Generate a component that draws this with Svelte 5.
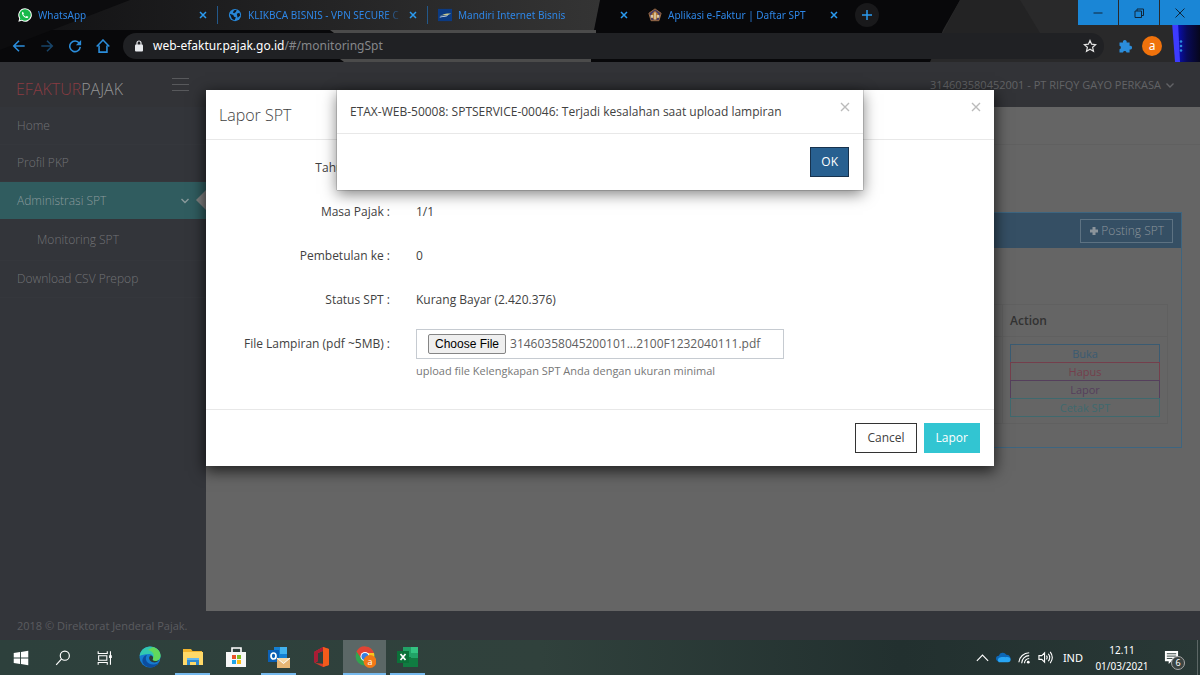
<script>
  let fileInput;
  let fileName = '31460358045200101...2100F1232040111.pdf';

  const tabs = [
    { icon: 'whatsapp', title: 'WhatsApp' },
    { icon: 'globe', title: 'KLIKBCA BISNIS - VPN SECURE C' },
    { icon: 'mandiri', title: 'Mandiri Internet Bisnis' },
    { icon: 'pajak', title: 'Aplikasi e-Faktur | Daftar SPT' }
  ];

  const details = [
    { label: 'Tahun Pajak :', value: '2021' },
    { label: 'Masa Pajak :', value: '1/1' },
    { label: 'Pembetulan ke :', value: '0' },
    { label: 'Status SPT :', value: 'Kurang Bayar (2.420.376)' }
  ];

  const actions = [
    { name: 'Buka', kind: 'blue' },
    { name: 'Hapus', kind: 'red' },
    { name: 'Lapor', kind: 'purple' },
    { name: 'Cetak SPT', kind: 'teal' }
  ];

  function onFileChange(event) {
    const file = event.target.files[0];
    if (file) fileName = file.name;
  }
</script>

<div class="screen">
  <header class="browser">
    <svg class="theme" viewBox="0 0 1200 62" preserveAspectRatio="none" aria-hidden="true">
      <defs>
        <linearGradient id="fade" x1="0" x2="1">
          <stop offset="0" stop-color="#111113" />
          <stop offset="1" stop-color="#343434" />
        </linearGradient>
        <linearGradient id="blue" x1="0" x2="1">
          <stop offset="0" stop-color="#0910d8" />
          <stop offset="0.5" stop-color="#080a58" />
          <stop offset="1" stop-color="#06061c" />
        </linearGradient>
      </defs>
      <rect width="1200" height="62" fill="#08080a" />
      <path d="M8 30V5Q8 0 14 0H600L594 30Z" fill="url(#fade)" />
      <path d="M0 50L130 0H0Z" fill="#0c0c0e" />
      <path d="M330 30H596V33H334Z" fill="#4b4b4b" />
      <path d="M340 59H591V62H344Z" fill="#4b4b4b" />
      <path d="M960 0H1180V62H930L943 30Z" fill="#29292a" />
      <path d="M960 0H1020L1040 33H943Z" fill="#232324" />
      <path d="M1174 22H1200V62H1179Z" fill="url(#blue)" />
      <path d="M1172 22H1178L1180 62H1175Z" fill="#3d3bff" />
    </svg>

    <div class="tab-row">
      {#each tabs as tab}
        <div class="tab">
          <svg class="tab-icon" viewBox="0 0 16 16" aria-hidden="true">
            {#if tab.icon === 'whatsapp'}
              <path d="M8 .3a7.7 7.7 0 0 0-6.600 11.600L.4 15.700l3.900-1A7.700 7.700 0 1 0 8 .3z" fill="#fff" />
              <path d="M8 1.500a6.500 6.500 0 0 0-5.400 10.100l-.6 2.500 2.500-.7A6.500 6.500 0 1 0 8 1.500z" fill="#19b94b" />
              <path d="M5.600 4.300c-.8.300-1.300 1.100-1 2.200.6 2.300 2.700 4.500 5 5 1.200.3 2.100-.4 2.200-1.500l-1.900-1-1 1C7.500 9.500 6.500 8.500 6 7.200l.8-.9z" fill="#fff" />
            {:else if tab.icon === 'globe'}
              <circle cx="8" cy="8" r="7" fill="#2787d8" />
              <path d="M2 6.500l4 1.500 1 2 2 .5-1.500 3.500-3-1.500zM7 2.500l3-.5-1 2.500-2 1.500-1.500-1zM10 6.500l3-1 1 3-3 2.500z" fill="#101820" />
            {:else if tab.icon === 'mandiri'}
              <rect y="1" width="16" height="14" fill="#0b3a82" />
              <path d="M1 9.500c3-1 5-1.500 7-1 2 .4 4-1.200 7-2-2-.3-4-.2-6 0-2 .2-3 1.200-4.500 1.500z" fill="#c9c98e" />
              <path d="M2 10.500c4-1.500 6 0 9-2" stroke="#c6d5e8" fill="none" />
            {:else}
              <path d="M8 1l7 5-2.500 8.500h-9L1 6z" fill="#443a67" stroke="#ab7440" />
              <path d="M8 3l4 4-2 6H6L4 7z" fill="#b0742f" />
              <path d="M7 5h2v8H7zM3 8h3v3H3zM10 8h3v3h-3z" fill="#dbc6a4" />
            {/if}
          </svg>
          <span class="tab-title">{tab.title}</span>
          <button class="tab-close" aria-label="Close tab">
            <svg viewBox="0 0 8 8"><path d="M1 1l6 6M7 1L1 7" /></svg>
          </button>
        </div>
      {/each}
      <button class="new-tab" aria-label="New tab">
        <svg viewBox="0 0 12 12"><path d="M6 1v10M1 6h10" /></svg>
      </button>
      <div class="window-buttons">
        <button aria-label="Minimize"><svg viewBox="0 0 12 12"><path d="M1.500 6h9" /></svg></button>
        <button aria-label="Restore"><svg viewBox="0 0 12 12"><path d="M2 4h6.500v6.500H2zM4 4V2h6.500v6.500h-2" /></svg></button>
        <button aria-label="Close"><svg viewBox="0 0 12 12"><path d="M1.500 1.500l9 9M10.500 1.500l-9 9" /></svg></button>
      </div>
    </div>

    <div class="toolbar">
      <button class="tool" aria-label="Back"><svg viewBox="0 0 16 16"><path d="M14.500 8H3M8 2L2 8l6 6" /></svg></button>
      <button class="tool dim" aria-label="Forward"><svg viewBox="0 0 16 16"><path d="M1.500 8H13M8 2l6 6-6 6" /></svg></button>
      <button class="tool" aria-label="Reload"><svg viewBox="0 0 16 16"><path d="M13 5A6 6 0 1 0 14 9" /><path d="M15 1v6H9z" fill="#2b8ddb" stroke="none" /></svg></button>
      <button class="tool" aria-label="Home"><svg viewBox="0 0 16 16"><path d="M.8 8.500L8 1.200l7.200 7.300M3.500 7.500v7.500h9v-7.500" /></svg></button>
      <div class="address">
        <svg class="lock" viewBox="0 0 10 12" aria-hidden="true">
          <rect x="1" y="4.500" width="8" height="7" rx="1" fill="#e8eaed" />
          <path d="M3 5V3a2 2 0 0 1 4 0v2" fill="none" stroke="#e8eaed" stroke-width="1.200" />
        </svg>
        <span class="url"><b>web-efaktur.pajak.go.id</b>/#/monitoringSpt</span>
        <button class="star" aria-label="Bookmark this page">
          <svg viewBox="0 0 14 14"><path d="M7 1.500l1.600 3.700 4 .4-3 2.700.9 4L7 10.200l-3.500 2.100.9-4-3-2.700 4-.4z" /></svg>
        </button>
      </div>
      <button class="side-tool" aria-label="Extensions">
        <svg viewBox="0 0 14 14"><path d="M1.500 3.500H5a1.900 1.900 0 1 1 3.600 0h3v3.300a1.900 1.900 0 1 1 0 3.600v3.100H8.500a1.800 1.800 0 0 0-3.500 0H1.500v-3.300a1.800 1.800 0 0 0 0-3.500z" fill="#2b8ddb" /></svg>
      </button>
      <button class="avatar" aria-label="Profile">a</button>
      <button class="side-tool" aria-label="Menu">
        <svg viewBox="0 0 14 14"><g fill="#2b8ddb"><circle cx="7" cy="2.500" r="1.300" /><circle cx="7" cy="7" r="1.300" /><circle cx="7" cy="11.500" r="1.300" /></g></svg>
      </button>
    </div>
  </header>

  <div class="page">
    <div class="topbar">
      <div class="brand-area">
        <a class="brand" href="#/home"><span>EFAKTUR</span>PAJAK</a>
        <button class="burger" aria-label="Toggle menu"><i></i><i></i><i></i></button>
      </div>
      <button class="user">
        314603580452001 - PT RIFQY GAYO PERKASA
        <svg viewBox="0 0 10 10"><path d="M1.500 3.500L5 7l3.500-3.500" /></svg>
      </button>
    </div>

    <div class="columns">
      <nav>
        <a href="#/home">Home</a>
        <a href="#/profil">Profil PKP</a>
        <a class="active" href="#/administrasi">
          Administrasi SPT
          <svg viewBox="0 0 10 10"><path d="M1.500 3L5 6.500 8.500 3" /></svg>
        </a>
        <a class="sub" href="#/monitoringSpt">Monitoring SPT</a>
        <a href="#/prepop">Download CSV Prepop</a>
      </nav>

      <main>
        <div class="crumb"></div>
        <section class="panel">
          <div class="panel-head">
            <button>
              <svg viewBox="0 0 10 10"><path d="M5 1v8M1 5h8" /></svg>
              Posting SPT
            </button>
          </div>
          <table>
            <thead>
              <tr><td></td><th class="action-col">Action</th></tr>
            </thead>
            <tbody>
              <tr>
                <td></td>
                <td class="action-col">
                  {#each actions as action}
                    <button class={action.kind}>{action.name}</button>
                  {/each}
                </td>
              </tr>
            </tbody>
          </table>
        </section>
      </main>
    </div>

    <footer>2018 © Direktorat Jenderal Pajak.</footer>

    <div class="layer">
      <div class="modal" role="dialog" aria-labelledby="lapor-title">
        <div class="modal-head">
          <h4 id="lapor-title">Lapor SPT</h4>
          <button class="dismiss" aria-label="Close"><svg viewBox="0 0 10 10"><path d="M1 1l8 8M9 1L1 9" /></svg></button>
        </div>
        <div class="modal-body">
          {#each details as row}
            <div class="row">
              <span class="label">{row.label}</span>
              <span>{row.value}</span>
            </div>
          {/each}
          <div class="row">
            <label class="label" for="lampiran">File Lampiran (pdf ~5MB) :</label>
            <div class="file-box">
              <button class="choose" on:click={() => fileInput.click()}>Choose File</button>
              <span>{fileName}</span>
              <input id="lampiran" type="file" accept=".pdf" bind:this={fileInput} on:change={onFileChange} />
            </div>
          </div>
          <p class="help">upload file Kelengkapan SPT Anda dengan ukuran minimal</p>
        </div>
        <div class="modal-foot">
          <button class="btn cancel">Cancel</button>
          <button class="btn submit">Lapor</button>
        </div>
      </div>
    </div>

    <div class="layer">
      <div class="alert" role="alertdialog" aria-labelledby="alert-text">
        <div class="alert-head">
          <span id="alert-text">ETAX-WEB-50008: SPTSERVICE-00046: Terjadi kesalahan saat upload lampiran</span>
          <button class="dismiss" aria-label="Close"><svg viewBox="0 0 10 10"><path d="M1 1l8 8M9 1L1 9" /></svg></button>
        </div>
        <div class="alert-foot">
          <button class="btn ok">OK</button>
        </div>
      </div>
    </div>
  </div>

  <div class="taskbar">
    <div class="start">
      <button aria-label="Start"><svg viewBox="0 0 22 22"><path d="M3 5.500l7-1v6H3zM11 4.300l8-1.200v7.400h-8zM3 11.500h7v6l-7-1zM11 11.500h8v7.400l-8-1.200z" fill="#fff" /></svg></button>
      <button aria-label="Search"><svg viewBox="0 0 22 22"><circle cx="13" cy="8.500" r="5" fill="none" stroke="#fff" stroke-width="1.300" /><path d="M9.500 12L3.500 18.500" stroke="#fff" stroke-width="1.300" /></svg></button>
      <button aria-label="Task view"><svg viewBox="0 0 22 22"><path d="M3.500 3.500V6h10V3.500M3.500 18.500V16h10v2.500M4 8.500h9v5H4zM17 3.500v15" fill="none" stroke="#fff" stroke-width="1.200" /><path d="M15.500 8h3v3h-3z" fill="#fff" /></svg></button>
    </div>
    <div class="apps">
      <button aria-label="Edge">
        <svg viewBox="0 0 22 22">
          <circle cx="11" cy="11" r="10.500" fill="#167bd0" />
          <path d="M.6 10C1.500 4 6 .5 11 .5c6 0 10.500 4 10.500 9 0 4-3 5.500-5.500 5.500-2 0-3-1-2-2.500 1-2-1-4.500-4-4.500-4 0-8 1-9.400 2z" fill="#32c8b0" />
          <path d="M14 1c5 1.500 7.500 5 7.500 8.500 0 4-3 5.500-5.500 5.500-2 0-3-1-2-2.500C16 9 14 5 9 4z" fill="#62d85c" />
          <path d="M8 9c-3 4 0 10 7 9.500 2 0 3.500-.8 5-2-2 3.500-5.500 5-9 5C5 21 2 16 4 12c1-2 2.500-3 4-3z" fill="#0c4d9f" />
          <path d="M14 12.500c-1 1.500 0 2.500 2 2.500 2 0 3.500-.5 4.500-1.500-2 3.500-7 4-9.500 1-1.500-2-1-4 .5-5 2 0 3 1.500 2.500 3z" fill="#2b3d3a" />
        </svg>
      </button>
      <button class="running" aria-label="File Explorer">
        <svg viewBox="0 0 22 22"><path d="M1 3h8l1.500 2H20v14H1z" fill="#f2b52e" /><path d="M1 6h20v13H1z" fill="#ffd968" /><path d="M5 12h12v7h-3v-3H8v3H5z" fill="#318bd0" /><path d="M5 12h12v2H5z" fill="#64b7ed" /></svg>
      </button>
      <button aria-label="Microsoft Store">
        <svg viewBox="0 0 22 22"><path d="M7 7V2h9v5" fill="none" stroke="#fff" stroke-width="1.600" /><path d="M1 6h20v15H1z" fill="#f7f7f7" /><path d="M7 9h4v4H7z" fill="#eb5328" /><path d="M12 9h4v4h-4z" fill="#80bd22" /><path d="M7 14h4v4H7z" fill="#20a5e8" /><path d="M12 14h4v4h-4z" fill="#fdba14" /></svg>
      </button>
      <button class="running" aria-label="Outlook">
        <svg viewBox="0 0 22 22"><path d="M6 1h13v14H6z" fill="#1480d2" /><path d="M12 1h7v7h-7z" fill="#42b3ed" /><path d="M0 4h11v12H0z" fill="#0c60b5" /><ellipse cx="5.500" cy="10" rx="2.500" ry="3" fill="none" stroke="#fff" stroke-width="1.700" /><path d="M9 12h13v10H9z" fill="#e8b675" /><path d="M9 12l6.500 5.500L22 12" fill="#f6d8a6" stroke="#fff" /></svg>
      </button>
      <button aria-label="Office">
        <svg viewBox="0 0 22 22"><path d="M3 6l9-5 6 2v16l-6 2-8-4 8 .8V5L7 7v8l-3 2z" fill="#d93b2a" /><path d="M12 1l6 2v16l-6 2z" fill="#f35b1b" /><path d="M3 6l9-5v4L7 7v8l-4 2z" fill="#a81d35" /></svg>
      </button>
      <button class="current" aria-label="Chrome">
        <svg viewBox="0 0 22 22"><circle cx="11" cy="10" r="9.500" fill="#32a350" /><path d="M2.500 5.500A9.500 9.500 0 0 1 20 7h-9l-4 5z" fill="#e14335" /><path d="M11 7h9c1.500 5-1.500 12-8 12.500l4-7z" fill="#f9c51d" /><circle cx="11" cy="10.500" r="4.500" fill="#fff" /><circle cx="11" cy="10.500" r="3.500" fill="#367fe4" /><circle cx="16" cy="15.500" r="6.500" fill="#f27816" /><text x="16" y="19" text-anchor="middle">a</text></svg>
      </button>
      <button class="running" aria-label="Excel">
        <svg viewBox="0 0 22 22"><path d="M6 1h15v20H6z" fill="#21a366" /><path d="M14 1h7v6h-7z" fill="#33c481" /><path d="M6 11h15v10H6z" fill="#107c41" /><path d="M14 7h7v5h-7z" fill="#21a366" /><path d="M0 5h12v12H0z" fill="#0b7139" /><path d="M3.500 8l5 6M8.500 8l-5 6" stroke="#fff" stroke-width="1.700" /></svg>
      </button>
    </div>
    <div class="tray">
      <svg viewBox="0 0 16 16"><path d="M2 11.500l6-6 6 6" class="line" /></svg>
      <svg class="cloud" viewBox="0 0 16 16"><path d="M3 12a3 3 0 0 1 0-6 4.500 4.500 0 0 1 8-1 4 4 0 0 1 3 7z" fill="#0d67b6" /><path d="M3 13a3 3 0 0 1 1-5c4-1 6 0 7-.5 3-.5 5 1 4.500 3.500-.3 1.500-1.500 2-2.500 2z" fill="#28a5f4" /></svg>
      <svg viewBox="0 0 16 16"><path d="M2 13A11 11 0 0 1 13 3M5 14a8 8 0 0 1 8-8M8 14a5 5 0 0 1 5-5" class="line" /><circle cx="12" cy="13" r="1.500" fill="#fff" /></svg>
      <svg viewBox="0 0 16 16"><path d="M1 6h3l3-3v10l-3-3H1zM9 6q1.500 2 0 4M11 4q3 4 0 8M13 2q4.500 6 0 12" class="line" /></svg>
      <span class="lang">IND</span>
      <div class="clock"><span>12.11</span><span>01/03/2021</span></div>
      <button class="notice" aria-label="Notifications">
        <svg viewBox="0 0 16 16"><path d="M1 1h14v11H8l-3 3v-3H1z" fill="#fff" /><path d="M3 4h10M3 6.500h10M3 9h6" stroke="#2b3d3a" /></svg>
        <span>6</span>
      </button>
    </div>
  </div>
</div>

<style>
  :global(body) {
    background: #33353a;
  }

  .screen {
    display: flex;
    flex-direction: column;
    min-height: 100vh;
    font-family: 'Open Sans', sans-serif;
    font-size: 12px;
    line-height: 16px;
  }

  button {
    padding: 0;
    border: 0;
    background: none;
    font: inherit;
    color: inherit;
    cursor: pointer;
  }

  a {
    color: inherit;
    text-decoration: none;
  }

  svg {
    display: block;
    flex-shrink: 0;
  }

  /* browser */
  .browser {
    position: relative;
    font-family: 'Noto Sans', sans-serif;
    color: #2b8ddb;
  }

  .theme {
    position: absolute;
    inset: 0;
    width: 100%;
    height: 100%;
  }

  .tab-row,
  .toolbar {
    position: relative;
    display: flex;
    align-items: center;
  }

  .tab-row {
    height: 30px;
    padding-left: 8px;
  }

  .tab {
    display: flex;
    align-items: center;
    box-sizing: border-box;
    width: 210px;
    height: 18px;
    padding: 0 10px;
    gap: 6px;
    font-size: 10px;
    color: #2e86e6;
  }

  .tab:nth-child(-n + 2) {
    border-right: 1px solid #23588a;
  }

  .tab-icon {
    width: 14px;
    height: 14px;
  }

  .tab-title {
    flex: 1;
    white-space: nowrap;
    mask-image: linear-gradient(to right, #000 88%, transparent);
  }

  .tab-close svg {
    width: 8px;
    height: 8px;
  }

  .tab-close svg,
  .new-tab svg {
    fill: none;
    stroke: #2b9bf0;
    stroke-width: 1.5;
  }

  .new-tab {
    display: grid;
    place-items: center;
    width: 24px;
    height: 24px;
    margin-left: 7px;
    border-radius: 50%;
    background: #19191b;
  }

  .new-tab svg {
    width: 12px;
    height: 12px;
  }

  .window-buttons {
    display: flex;
    align-self: flex-start;
    gap: 1px;
    margin-left: auto;
  }

  .window-buttons button {
    display: grid;
    place-items: center;
    width: 40px;
    height: 25px;
    background: #1a86d6;
  }

  .window-buttons svg {
    width: 12px;
    height: 12px;
    fill: none;
    stroke: #10263a;
  }

  .toolbar {
    height: 32px;
    padding: 0 16px 0 5px;
  }

  .tool {
    display: grid;
    place-items: center;
    width: 28px;
    height: 28px;
  }

  .tool svg {
    width: 14px;
    height: 14px;
    fill: none;
    stroke: #2b8ddb;
    stroke-width: 1.8;
  }

  .dim {
    opacity: 0.45;
  }

  .address {
    display: flex;
    flex: 1;
    align-items: center;
    height: 26px;
    margin-left: 6px;
    padding: 0 7px 0 11px;
    border-radius: 13px;
    background: #202124;
    font-size: 12px;
    color: #85878a;
  }

  .lock {
    width: 10px;
    height: 12px;
    margin-right: 9px;
  }

  .url {
    flex: 1;
  }

  .url b {
    font-weight: 400;
    color: #fff;
  }

  .star svg {
    width: 14px;
    height: 14px;
    fill: none;
    stroke: #e4e4e4;
    stroke-width: 1.2;
  }

  .side-tool {
    display: grid;
    place-items: center;
    width: 14px;
    margin-left: 14px;
  }

  .side-tool svg {
    width: 14px;
    height: 14px;
  }

  .avatar {
    width: 20px;
    height: 20px;
    margin: 0 2px 0 10px;
    border-radius: 50%;
    background: #f0720c;
    color: #fff;
  }

  .avatar + .side-tool {
    width: 10px;
    margin-left: 10px;
  }

  /* application page */
  .page {
    position: relative;
    display: flex;
    flex: 1;
    flex-direction: column;
    background: #33353a;
    color: #5b5c60;
  }

  .topbar {
    display: flex;
    justify-content: space-between;
    height: 45px;
    background: #323337;
  }

  .brand-area {
    display: flex;
    align-items: flex-start;
    justify-content: space-between;
    box-sizing: border-box;
    width: 206px;
    padding: 16px 17px 0 16px;
  }

  .brand {
    font-size: 16px;
    font-weight: 300;
    line-height: 22px;
    color: #939395;
  }

  .brand span {
    color: #8a3b42;
  }

  .burger {
    display: grid;
    gap: 5px;
  }

  .burger i {
    width: 17px;
    height: 1px;
    background: #58595c;
  }

  .user {
    display: flex;
    align-items: center;
    height: 16px;
    margin: 15px 25px 0 0;
    gap: 4px;
    font-size: 11px;
    color: #626366;
  }

  .user svg,
  .active svg {
    width: 10px;
    height: 10px;
    fill: none;
    stroke: currentColor;
    stroke-width: 1.4;
  }

  .columns {
    display: flex;
    flex: 1;
  }

  nav {
    width: 206px;
    padding-top: 1px;
  }

  nav a {
    display: flex;
    align-items: center;
    justify-content: space-between;
    height: 36px;
    padding: 0 16px 0 17px;
    border-bottom: 1px solid #35373c;
    font-weight: 300;
    color: #727376;
  }

  nav .active {
    position: relative;
    height: 37px;
    border: 0;
    background: #305c5f;
    color: #8a9a9c;
  }

  .active::after {
    position: absolute;
    top: 8px;
    right: 0;
    border: solid transparent;
    border-width: 10px 10px 10px 0;
    border-right-color: #808080;
    content: '';
  }

  nav .sub {
    height: 41px;
    padding-left: 37px;
  }

  main {
    flex: 1;
    background: #656565;
  }

  .crumb {
    height: 37px;
    border-bottom: 1px solid #606060;
  }

  .panel {
    margin: 67px 18px 0 20px;
    padding-bottom: 23px;
    border: 1px solid #3d6580;
  }

  .panel-head {
    display: flex;
    align-items: center;
    justify-content: flex-end;
    height: 35px;
    padding-right: 8px;
    background: #354f64;
  }

  .panel-head button {
    display: flex;
    align-items: center;
    height: 24px;
    padding: 0 8px;
    border: 1px solid #5d7282;
    gap: 2px;
    font-weight: 300;
    color: #8b949b;
  }

  .panel-head svg {
    width: 10px;
    height: 10px;
    stroke: currentColor;
    stroke-width: 3;
  }

  table {
    width: calc(100% - 28px);
    margin: 56px 13px 0 15px;
    border: 1px solid #606060;
    border-collapse: collapse;
  }

  th,
  td {
    padding: 8px 7px 7px;
    border: 1px solid #606060;
    text-align: left;
  }

  th {
    font-weight: 600;
    color: #323232;
  }

  td.action-col {
    padding-top: 7px;
  }

  .action-col {
    width: 150px;
  }

  td button {
    display: block;
    box-sizing: border-box;
    width: 100%;
    height: 19px;
    margin-bottom: -1px;
    border: 1px solid;
    font-size: 11px;
    line-height: 16px;
  }

  .blue {
    color: #3a5b72;
  }

  .red {
    color: #743f4c;
  }

  .purple {
    color: #553f5c;
  }

  .teal {
    color: #3f696e;
  }

  footer {
    height: 29px;
    padding-left: 17px;
    font-size: 11px;
    line-height: 30px;
  }

  /* dialogs */
  .layer {
    position: absolute;
    top: 28px;
    right: 0;
    left: 0;
    display: flex;
    justify-content: center;
    pointer-events: none;
  }

  .modal,
  .alert {
    background: #fff;
    color: #414141;
    pointer-events: auto;
  }

  .modal {
    width: 788px;
    box-shadow: 0 4px 14px 1px rgba(0, 0, 0, 0.7);
  }

  .alert {
    width: 526px;
    box-shadow: 0 4px 14px rgba(0, 0, 0, 0.5), 0 0 1px #333;
  }

  .modal-head,
  .alert-head {
    display: flex;
    align-items: center;
    justify-content: space-between;
    padding: 0 13px;
    border-bottom: 1px solid #e8e8e8;
  }

  .modal-head {
    height: 49px;
  }

  .alert-head {
    height: 43px;
  }

  h4 {
    margin: 0;
    font-size: 16px;
    font-weight: 300;
    line-height: 22px;
  }

  .dismiss {
    align-self: flex-start;
    padding-top: 12px;
  }

  .dismiss svg {
    width: 10px;
    height: 10px;
    fill: none;
    stroke: #bbb;
    stroke-width: 1.4;
  }

  .modal-body {
    padding: 13px 0 30px;
  }

  .row {
    display: grid;
    grid-template-columns: 184px 368px;
    align-items: center;
    height: 30px;
    margin-bottom: 14px;
    gap: 26px;
    line-height: 18px;
  }

  .label {
    text-align: right;
  }

  .file-box {
    position: relative;
    display: flex;
    align-items: center;
    height: 28px;
    padding-left: 11px;
    border: 1px solid #c6cbd1;
    gap: 4px;
    color: #606060;
  }

  .file-box input {
    position: absolute;
    width: 1px;
    height: 1px;
    opacity: 0;
    pointer-events: none;
  }

  .choose {
    height: 20px;
    padding: 0 6px;
    border: 1px solid #858585;
    border-radius: 2px;
    background: #efefef;
    font-family: 'Liberation Sans', Arial, sans-serif;
    font-size: 12px;
    color: #000;
  }

  .help {
    margin: -10px 0 0 210px;
    font-size: 11px;
    color: #777;
  }

  .modal-foot,
  .alert-foot {
    display: flex;
    justify-content: flex-end;
    padding: 13px 14px;
    gap: 7px;
  }

  .modal-foot {
    border-top: 1px solid #e8e8e8;
  }

  .btn {
    height: 30px;
    padding: 0 11px;
    border: 1px solid;
  }

  .cancel {
    border-color: #333;
  }

  .submit {
    border-color: #32c5d2;
    background: #32c5d2;
    color: #fff;
  }

  .ok {
    padding: 0 10px;
    border-color: #17324d;
    background: #286090;
    color: #fff;
  }

  /* taskbar */
  .taskbar {
    display: flex;
    height: 35px;
    background: linear-gradient(to right, #2d403c, #30413c 45%, #22302f 75%, #293836);
    color: #fff;
  }

  .start,
  .apps {
    display: flex;
  }

  .start {
    margin-right: 2px;
  }

  .start button {
    width: 42px;
  }

  .apps button {
    box-sizing: border-box;
    width: 43px;
    border-bottom: 2px solid transparent;
  }

  .start button,
  .apps button {
    display: grid;
    place-items: center;
  }

  .start svg,
  .apps svg {
    width: 22px;
    height: 22px;
  }

  .start svg {
    width: 20px;
    height: 20px;
  }

  .apps text {
    fill: #fff;
    font-size: 9px;
  }

  .apps .running {
    background: linear-gradient(#76b9ed, #76b9ed) center bottom / 35px 2px no-repeat border-box;
  }

  .apps .current {
    border-bottom-color: #76b9ed;
    background: #5b6766;
  }

  .tray {
    display: flex;
    align-items: center;
    margin-right: 2px;
    margin-left: auto;
    padding-right: 3px;
    border-right: 1px solid #5c6766;
    gap: 6px;
    font-family: 'Noto Sans', sans-serif;
    font-size: 10px;
  }

  .tray svg {
    width: 15px;
    height: 15px;
  }

  .line {
    fill: none;
    stroke: #fff;
    stroke-width: 1.2;
  }

  .lang {
    margin: 0 6px 0 4px;
    font-size: 11px;
  }

  .clock {
    display: grid;
    justify-items: center;
    width: 54px;
  }

  .notice {
    position: relative;
    margin: 0 15px 0 9px;
  }

  .notice span {
    position: absolute;
    top: 6px;
    left: 7px;
    box-sizing: border-box;
    width: 14px;
    height: 14px;
    border: 1px solid #aaa;
    border-radius: 50%;
    background: #3a4341;
    font-size: 9px;
    line-height: 12px;
  }
</style>
